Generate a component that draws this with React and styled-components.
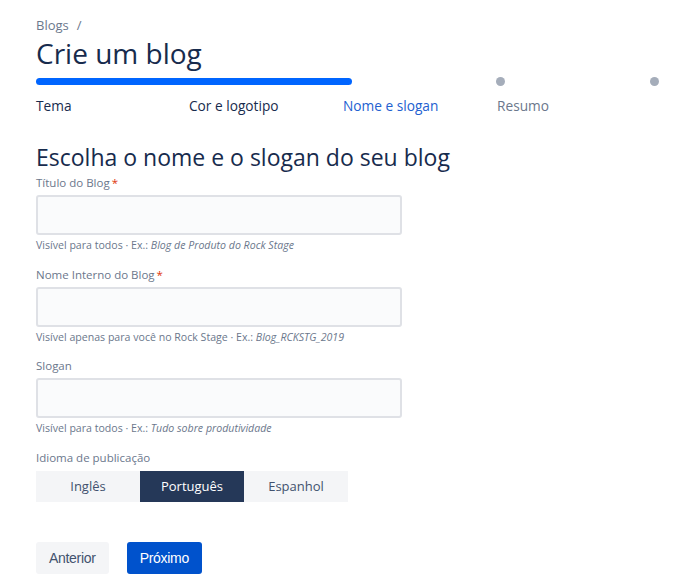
import React, { useState } from "react";
import styled, { createGlobalStyle } from "styled-components";

const GlobalStyle = createGlobalStyle`
  body {
    margin: 0;
    background: #fff;
    font-family: "Open Sans", "Noto Sans", sans-serif;
    color: #172b4d;
  }
  * { box-sizing: border-box; }
`;

const Page = styled.div`
  padding: 15px 28px 0 36px;
  width: 686px;
`;
const Breadcrumb = styled.div`
  font-size: 13px;
  color: #6b778c;
  line-height: 20px;
  display: flex;
  gap: 8px;
`;
const Title = styled.h1`
  margin: 0;
  font-size: 28px;
  font-weight: 500;
  line-height: 36px;
  color: #172b4d;
`;
const Track = styled.div`
  margin-top: 6px;
  height: 7px;
  display: grid;
  grid-template-columns: 316px 153px 154px;
  align-items: center;
`;
const Fill = styled.div`
  height: 7px;
  border-radius: 4px;
  background: #0065ff;
`;
const Dot = styled.div`
  width: 9px;
  height: 9px;
  border-radius: 50%;
  background: #a5adba;
  justify-self: end;
`;
const Steps = styled.div`
  display: grid;
  grid-template-columns: 153px repeat(3, 154px);
  margin-top: 13px;
`;
const Step = styled.div`
  font-size: 13.7px;
  line-height: 18px;
  font-weight: ${(p) => (p.state === "next" ? 400 : 500)};
  color: ${(p) =>
    p.state === "current" ? "#2260d0" : p.state === "done" ? "#172b4d" : "#6b778c"};
`;
const Heading = styled.h2`
  margin: 27px 0 0;
  font-size: 23px;
  font-weight: 500;
  line-height: 30px;
  color: #172b4d;
`;
const Field = styled.div`
  margin-top: ${(p) => (p.first ? "3px" : "13.5px")};
  display: flex;
  flex-direction: column;
`;
const Label = styled.label`
  font-size: 11.5px;
  line-height: 16px;
  color: #6b778c;
`;
const Required = styled.span`
  color: #de350b;
  margin-left: 2px;
`;
const Input = styled.input`
  margin-top: 4px;
  width: 366px;
  height: 40px;
  border: 2px solid #dfe1e6;
  border-radius: 3px;
  background: #fafbfc;
  outline: none;
  font: inherit;
  padding: 0 8px;
`;
const Help = styled.div`
  margin-top: 2px;
  font-size: 10.6px;
  line-height: 16px;
  color: #6b778c;
  em { font-style: italic; }
`;
const Segments = styled.div`
  margin-top: 5px;
  display: flex;
`;
const Segment = styled.button`
  width: 104px;
  height: 31px;
  border: none;
  font-family: inherit;
  font-size: 13px;
  background: ${(p) => (p.active ? "#253858" : "#f4f5f7")};
  color: ${(p) => (p.active ? "#fff" : "#42526e")};
  cursor: pointer;
`;
const Actions = styled.div`
  margin-top: 40px;
  display: flex;
  gap: 18px;
  align-items: center;
`;
const Button = styled.button`
  height: 32px;
  padding: 0 13px;
  border: none;
  border-radius: 3px;
  font-family: "Liberation Sans", Arial, sans-serif;
  font-size: 14px;
  letter-spacing: -0.3px;
  background: ${(p) => (p.primary ? "#0052cc" : "#f4f5f7")};
  color: ${(p) => (p.primary ? "#fff" : "#42526e")};
  cursor: pointer;
`;

const steps = [
  { label: "Tema", state: "done" },
  { label: "Cor e logotipo", state: "done" },
  { label: "Nome e slogan", state: "current" },
  { label: "Resumo", state: "next" },
];

const fields = [
  {
    label: "Título do Blog",
    required: true,
    help: "Visível para todos · Ex.: ",
    example: "Blog de Produto do Rock Stage",
  },
  {
    label: "Nome Interno do Blog",
    required: true,
    help: "Visível apenas para você no Rock Stage · Ex.: ",
    example: "Blog_RCKSTG_2019",
  },
  {
    label: "Slogan",
    required: false,
    help: "Visível para todos · Ex.: ",
    example: "Tudo sobre produtividade",
  },
];

const languages = ["Inglês", "Português", "Espanhol"];

const App = () => {
  const [lang, setLang] = useState("Português");
  return (
    <Page>
      <GlobalStyle />
      <Breadcrumb>
        <span>Blogs</span>
        <span>/</span>
      </Breadcrumb>
      <Title>Crie um blog</Title>
      <Track>
        <Fill />
        <Dot />
        <Dot />
      </Track>
      <Steps>
        {steps.map((s) => (
          <Step key={s.label} state={s.state}>
            {s.label}
          </Step>
        ))}
      </Steps>
      <Heading>Escolha o nome e o slogan do seu blog</Heading>
      {fields.map((f, i) => (
        <Field key={f.label} first={i === 0}>
          <Label>
            {f.label}
            {f.required && <Required>*</Required>}
          </Label>
          <Input type="text" />
          <Help>
            {f.help}
            <em>{f.example}</em>
          </Help>
        </Field>
      ))}
      <Field>
        <Label>Idioma de publicação</Label>
        <Segments>
          {languages.map((l) => (
            <Segment key={l} active={l === lang} onClick={() => setLang(l)}>
              {l}
            </Segment>
          ))}
        </Segments>
      </Field>
      <Actions>
        <Button>Anterior</Button>
        <Button primary>Próximo</Button>
      </Actions>
    </Page>
  );
};

export default App;
